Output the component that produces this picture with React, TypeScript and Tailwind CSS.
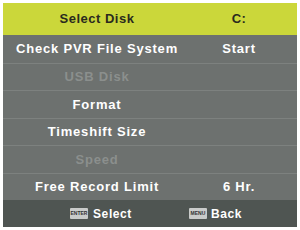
export default function App() {
  const rows = [
    { label: "Check PVR File System", value: "Start", dim: false },
    { label: "USB Disk", value: "", dim: true },
    { label: "Format", value: "", dim: false },
    { label: "Timeshift Size", value: "", dim: false },
    { label: "Speed", value: "", dim: true },
    { label: "Free Record Limit", value: "6 Hr.", dim: false },
  ];

  return (
    <div className="w-[300px] h-[230px] bg-white p-[3px]" style={{ fontFamily: '"Liberation Sans", Arial, sans-serif' }}>
      <div className="flex flex-col h-full bg-[#6d716f] font-bold text-[13px] tracking-[0.8px]">
        <div className="flex items-center h-[32px] bg-[#cbd73a] text-[#2a2a1e] tracking-[0.5px]">
          <div className="w-[188px] text-center">Select Disk</div>
          <div className="flex-1 text-center pr-[10px]">C:</div>
        </div>
        {rows.map((r, i) => (
          <div
            key={i}
            className={`flex items-center h-[27.5px] ${i > 0 ? "border-t border-[#7d817f]" : ""} ${r.dim ? "text-[#8b8f8d]" : "text-white"}`}
          >
            <div className="w-[188px] text-center">{r.label}</div>
            <div className="flex-1 text-center pr-[10px]">{r.value}</div>
          </div>
        ))}
        <div className="flex-1 flex items-center bg-[#4f5552] text-white text-[12px] tracking-[0.6px]">
          <div className="flex items-center gap-[5px] ml-[67px]">
            <span className="w-[18px] h-[11px] bg-[#c9cbca] rounded-[1px] text-[5px] leading-[11px] text-center text-[#333] tracking-normal">ENTER</span>
            <span>Select</span>
          </div>
          <div className="flex items-center gap-[4px] ml-[57px]">
            <span className="w-[18px] h-[11px] bg-[#c9cbca] rounded-[1px] text-[5px] leading-[11px] text-center text-[#333] tracking-normal">MENU</span>
            <span>Back</span>
          </div>
        </div>
      </div>
    </div>
  );
}
